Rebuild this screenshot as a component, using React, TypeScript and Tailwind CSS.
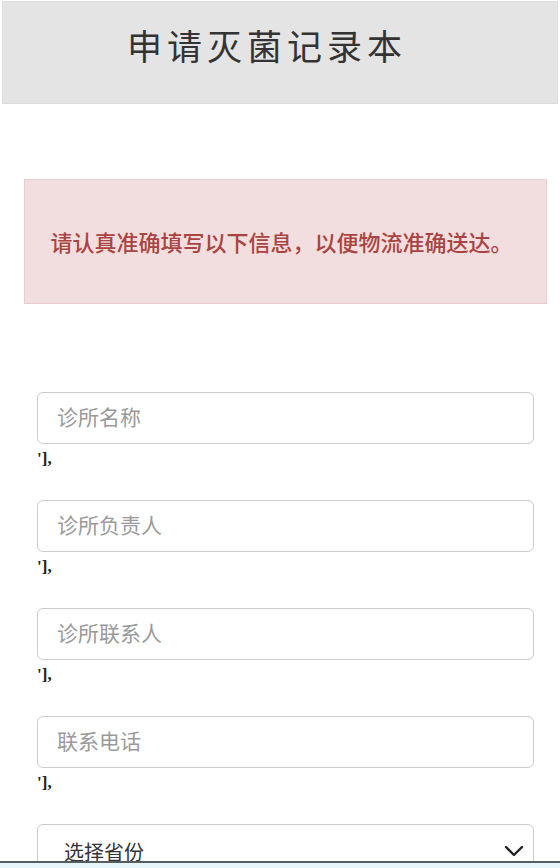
import React from "react";

const font = { fontFamily: '"Noto Sans CJK SC", "Noto Sans", sans-serif' };

function Field({ placeholder }: { placeholder: string }) {
  return (
    <div className="flex flex-col">
      <input
        placeholder={placeholder}
        className="h-[52px] w-[497px] rounded-[6px] border border-[#cccccc] bg-white px-[19px] pb-[5px] text-[21px] text-[#333] placeholder:text-[#9a9a9a] outline-none"
        style={font}
      />
      <div className="h-[26px] text-[17px] leading-[30px] text-[#222] font-bold" style={{ fontFamily: '"Liberation Serif", serif' }}>
        '],
      </div>
    </div>
  );
}

export default function App() {
  return (
    <div className="relative h-[868px] w-[560px] overflow-hidden bg-white" style={font}>
      <div className="mx-[2px] mt-[1px] flex h-[103px] items-center justify-center border border-[#dddddd] bg-[#e4e4e4]">
        <h1 className="mb-[14px] pr-[26px] text-[35px] font-normal tracking-[5px] text-[#333]">申请灭菌记录本</h1>
      </div>
      <div className="ml-[24px] mt-[75px] flex h-[125px] w-[523px] items-center justify-center border border-[#ebccd1] bg-[#f2dede]">
        <p className="pr-[8px] text-[22px] font-medium text-[#a94442]">请认真准确填写以下信息，以便物流准确送达。</p>
      </div>
      <div className="ml-[37px] mt-[88px] flex flex-col gap-[30px]">
        <Field placeholder="诊所名称" />
        <Field placeholder="诊所负责人" />
        <Field placeholder="诊所联系人" />
        <Field placeholder="联系电话" />
        <div className="flex h-[52px] w-[497px] items-center justify-between rounded-[6px] border border-[#cccccc] bg-white pl-[26px] pr-[7px]">
          <span className="mt-[4px] text-[20px] text-[#333]">选择省份</span>
          <svg width="24" height="24" viewBox="0 0 24 24" fill="none" stroke="#222" strokeWidth="2.4" strokeLinecap="round" strokeLinejoin="round" className="mt-[2px]">
            <path d="M4 8l8 8 8-8" />
          </svg>
        </div>
      </div>
      <div className="absolute bottom-0 left-0 right-0 flex flex-col">
        <div className="h-[2px] bg-[#555c63]" />
        <div className="h-[5px] bg-[#e6f6fb]" />
      </div>
    </div>
  );
}
